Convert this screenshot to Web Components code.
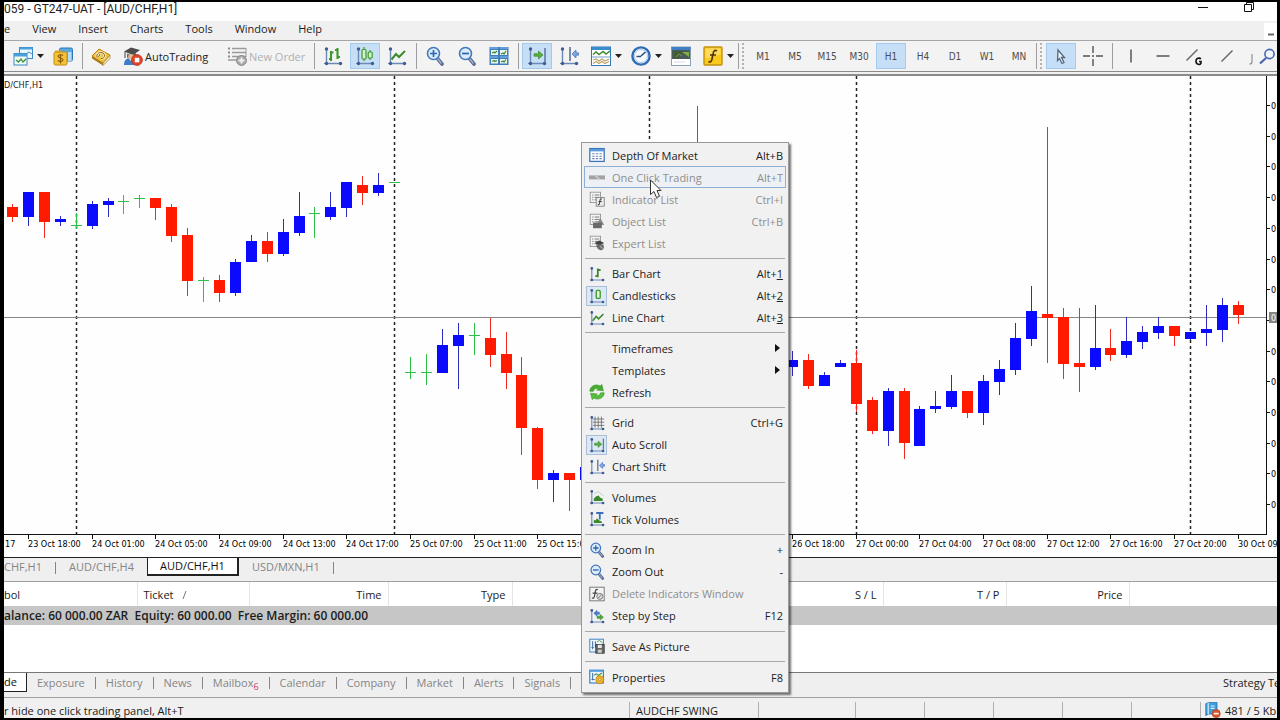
<!DOCTYPE html>
<html lang="en">
<head>
<meta charset="utf-8">
<title>GT247-UAT - [AUD/CHF,H1]</title>
<style>
  html, body { height: 100%; }
  body {
    margin: 0;
    padding: 2px 3px 2px 4px;
    box-sizing: border-box;
    background: #000;
    overflow: hidden;
    font-family: "Open Sans", "Noto Sans", sans-serif;
    font-size: 11px;
    color: #1c1c1c;
  }
</style>
</head>
<body>
<terminal-window>
  <title-bar slot="top">059 - GT247-UAT - [AUD/CHF,H1]</title-bar>
  <menu-bar slot="top" items="e,View,Insert,Charts,Tools,Window,Help"></menu-bar>
  <tool-bar slot="top">
    <tool-button icon="newChart" label="New chart" drop></tool-button>
    <tool-button icon="profiles" label="Profiles"></tool-button>
    <tool-sep></tool-sep>
    <tool-button icon="tag" label="MetaEditor"></tool-button>
    <tool-button icon="expert" style="--w: 102px" text>AutoTrading</tool-button>
    <tool-button icon="order" style="--w: 88px" text disabled>New Order</tool-button>
    <tool-sep></tool-sep>
    <tool-button icon="bars" label="Bar chart"></tool-button>
    <tool-button icon="candles" label="Candlesticks" active></tool-button>
    <tool-button icon="line" label="Line chart"></tool-button>
    <tool-sep></tool-sep>
    <tool-button icon="zoomIn" label="Zoom in"></tool-button>
    <tool-button icon="zoomOut" label="Zoom out"></tool-button>
    <tool-button icon="tile" label="Tile windows"></tool-button>
    <tool-sep></tool-sep>
    <tool-button icon="scroll" label="Auto scroll" active></tool-button>
    <tool-button icon="shift" label="Chart shift"></tool-button>
    <tool-button icon="indicators" label="Indicators" drop></tool-button>
    <tool-button icon="clock" label="Periods" drop></tool-button>
    <tool-button icon="template" label="Templates"></tool-button>
    <tool-button icon="func" label="Functions" drop></tool-button>
    <tool-sep grip></tool-sep>
    <tool-button frame>M1</tool-button>
    <tool-button frame>M5</tool-button>
    <tool-button frame>M15</tool-button>
    <tool-button frame>M30</tool-button>
    <tool-button frame active>H1</tool-button>
    <tool-button frame>H4</tool-button>
    <tool-button frame>D1</tool-button>
    <tool-button frame>W1</tool-button>
    <tool-button frame>MN</tool-button>
    <tool-sep grip></tool-sep>
    <tool-button icon="pointer" label="Cursor" active></tool-button>
    <tool-button icon="cross" label="Crosshair"></tool-button>
    <tool-sep></tool-sep>
    <tool-button icon="vline" label="Vertical line"></tool-button>
    <tool-button icon="hline" label="Horizontal line"></tool-button>
    <tool-button icon="gann" label="Gann line"></tool-button>
    <tool-button icon="trend" label="Trendline"></tool-button>
    <tool-button icon="more" label="More" style="--w: 12px"></tool-button>
    <tool-button icon="search" label="Search" style="--w: 20px"></tool-button>
  </tool-bar>
  <price-chart></price-chart>
  <chart-tabs slot="bottom" items="CHF,H1|AUD/CHF,H4|AUD/CHF,H1|USD/MXN,H1" current="2"></chart-tabs>
  <trade-table slot="bottom"></trade-table>
  <panel-tabs slot="bottom"></panel-tabs>
  <status-bar slot="bottom">
    <span>r hide one click trading panel, Alt+T</span>
    <span slot="profile">AUDCHF SWING</span>
    <span slot="traffic">481 / 5 Kb</span>
  </status-bar>
</terminal-window>

<context-menu>
  <menu-item icon="depth">Depth Of Market<span slot="key">Alt+B</span></menu-item>
  <menu-item icon="oneClick" disabled hot>One Click Trading<span slot="key">Alt+T</span></menu-item>
  <menu-item icon="indList" disabled>Indicator List<span slot="key">Ctrl+I</span></menu-item>
  <menu-item icon="objList" disabled>Object List<span slot="key">Ctrl+B</span></menu-item>
  <menu-item icon="expList" disabled>Expert List</menu-item>
  <hr>
  <menu-item icon="bar1">Bar Chart<span slot="key">Alt+<u>1</u></span></menu-item>
  <menu-item icon="candle1" checked>Candlesticks<span slot="key">Alt+<u>2</u></span></menu-item>
  <menu-item icon="line">Line Chart<span slot="key">Alt+<u>3</u></span></menu-item>
  <hr>
  <menu-item sub>Timeframes</menu-item>
  <menu-item sub>Templates</menu-item>
  <menu-item icon="refresh">Refresh</menu-item>
  <hr>
  <menu-item icon="grid">Grid<span slot="key">Ctrl+G</span></menu-item>
  <menu-item icon="scroll" checked>Auto Scroll</menu-item>
  <menu-item icon="shift">Chart Shift</menu-item>
  <hr>
  <menu-item icon="volumes">Volumes</menu-item>
  <menu-item icon="ticks">Tick Volumes</menu-item>
  <hr>
  <menu-item icon="zoomIn">Zoom In<span slot="key">+</span></menu-item>
  <menu-item icon="zoomOut">Zoom Out<span slot="key">-</span></menu-item>
  <menu-item icon="delInd" disabled>Delete Indicators Window</menu-item>
  <menu-item icon="step">Step by Step<span slot="key">F12</span></menu-item>
  <hr>
  <menu-item icon="save">Save As Picture</menu-item>
  <hr>
  <menu-item icon="props">Properties<span slot="key">F8</span></menu-item>
</context-menu>
<mouse-pointer></mouse-pointer>

<script>
'use strict';

// shared pieces of the 20x20 icons
const AXES = `<path d="M3.5 2v15.5H18" fill="none" stroke="#6d89b5" stroke-width="1.4"/>
  <path d="M1 17.500h3M3.500 16v3" stroke="#6d89b5"/>
  <circle cx="3.500" cy="3" r="1.700" fill="#3d5c92"/><circle cx="3.500" cy="17.500" r="1.700" fill="#3d5c92"/><circle cx="17.500" cy="17.500" r="1.700" fill="#3d5c92"/>`;
const LENS = `<path d="M12 12l5 6" stroke="#5c6c90" stroke-width="3.600" stroke-linecap="round"/><path d="M12 12l4.500 5.500" stroke="#a7b6d2" stroke-width="1.200"/>
  <circle cx="8.500" cy="7.500" r="6" fill="#dcecfb" stroke="#4478bd" stroke-width="1.600"/>`;
const LIST = `<rect x="1.500" y="1.500" width="13" height="13" fill="#f4f4f4" stroke="#8a8a8a"/>
  <path d="M4 5h1.500M7 5h6M4 8h1.500M7 8h6M4 11h1.500M7 11h6" stroke="#777" stroke-width="1.200"/>`;

const ICONS = {
  newChart: `<rect x="6.500" y="1.500" width="13" height="11" fill="#e8f6fd" stroke="#3a8ac8"/><path d="M6.500 2.500h13" stroke="#4aa0dc" stroke-width="2"/><path d="M8 7l3 2 5-3 3 2" fill="none" stroke="#4a90b8"/>
    <rect x="1" y="7.500" width="13" height="11.500" fill="#f2faf4" stroke="#3a8ac8"/><path d="M1 9h13" stroke="#4aa0dc" stroke-width="3"/><path d="M3 14l2.500 2 2.500-3 2 3 3-3" fill="none" stroke="#3a8f3a" stroke-width="1.300"/>`,
  profiles: `<rect x="6.500" y="2" width="13" height="13" rx="1.500" fill="#5aa8e0" stroke="#2f76b5"/><path d="M15 15v-9h3.500v9z" fill="#b7dcf5"/>
    <rect x="1" y="6" width="13" height="13" rx="1.500" fill="#f6c23a" stroke="#c08c14"/><path d="M2 5.500h6" stroke="#d9a426" stroke-width="2"/>
    <path d="M10 9.500c-1-1.200-5-1-5 .8 0 2.200 5 1.200 5 3.500 0 2-4 2-5.200.6M7.500 8v9.500" fill="none" stroke="#8a5f08" stroke-width="1.200"/>`,
  tag: `<path d="M1 10L8 3l11 6-7 8.500z" fill="#f0bf3c" stroke="#b88415"/><path d="M1 10v2.500l11 7V17z" fill="#a87c16"/><path d="M12 17l7-8v3.500l-7 7z" fill="#efe6bd" stroke="#a0822b" stroke-width=".7"/>
    <path d="M6 11c-1-3 3-6 6-4s1 6-2 5.500M9 8l-1.500 3" fill="none" stroke="#fff6c8" stroke-width="2.600"/><path d="M6 11c-1-3 3-6 6-4s1 6-2 5.500M9 8l-1.500 3" fill="none" stroke="#7a5a0a" stroke-width="1"/>`,
  expert: `<path d="M1 5.500L8 1.500l9 2.500-7 5z" fill="#4c4c4c"/><path d="M4 7.500v4c3 2 7 1 9-1v-4l-4 3z" fill="#6b6b6b"/><path d="M2 6v6" stroke="#444"/>
    <circle cx="8" cy="11" r="2.800" fill="#e8b68c"/><path d="M1 19c0-5 2.500-6.500 4.500-6.500L8 15l2.500-2.500c2.500 0 4.500 1.500 4.500 6.500z" fill="#3f7fc8"/>
    <circle cx="14" cy="14" r="5.400" fill="#e0452a" stroke="#b2301c" stroke-width=".8"/><rect x="11.800" y="11.800" width="4.500" height="4.500" fill="#fff"/>`,
  order: `<path d="M1 2.500h2M1 6.500h2M1 10.500h2" stroke="#8c8c8c" stroke-width="2"/><path d="M5 2.500h14M5 6.500h14M5 10.500h14M1 14h8" stroke="#9a9a9a" stroke-width="1.600"/><path d="M19 2v9" stroke="#9a9a9a"/>
    <circle cx="14.500" cy="14.500" r="5" fill="#a8a8a8" stroke="#8e8e8e"/><path d="M14.500 11.500v6M11.500 14.500h6" stroke="#f3f3f3" stroke-width="1.800"/>`,
  bars: AXES + `<path d="M8 5v10M6 13h2M8 6.500h2.500M14.500 2v11M12 4h2.500M14.500 11H17" stroke="#3c9a2c" stroke-width="2.100" fill="none"/>`,
  bar1: AXES + `<path d="M11 3v11M8 12.500h3M11 5h3.500" stroke="#3a8a2c" stroke-width="2.200" fill="none"/>`,
  candles: AXES + `<path d="M9 1v14M15 4v10" stroke="#3c9a2c" stroke-width="1.200"/><rect x="7" y="3.500" width="4" height="9.500" rx="1" fill="#d5f3c8" stroke="#3c9a2c" stroke-width="1.200"/><rect x="13.200" y="6" width="4" height="6" rx="1" fill="#d5f3c8" stroke="#3c9a2c" stroke-width="1.200"/>`,
  candle1: AXES + `<rect x="9" y="3" width="5" height="10" rx="1.500" fill="#e4f6dc" stroke="#3c9a2c" stroke-width="1.700"/>`,
  line: AXES + `<path d="M4.500 13.500L9 8l3 3 6-6" fill="none" stroke="#3c8a2c" stroke-width="2"/>`,
  zoomIn: LENS + `<path d="M5 7.500h7M8.500 4v7" stroke="#2f66b0" stroke-width="1.700"/>`,
  zoomOut: LENS + `<path d="M5 7.500h7" stroke="#2f66b0" stroke-width="1.700"/>`,
  tile: `<rect x=".5" y="1" width="19" height="18" fill="#3f7fc0"/><path d="M2 4h7v5H2zM11 4h7v5h-7zM2 13h7v4.500H2zM11 13h7v4.500h-7z" fill="#eef8ee"/><path d="M1 2h8M11 2h8M1 11h8M11 11h8" stroke="#86c3ee"/>
    <path d="M3 7l2-1 1 1 2-2M12 8l2-1 1 1 2-3M3 15.500l2-1 1 1 2-1M12 16l2-1 1 1 2-2.500" fill="none" stroke="#3a8a3a" stroke-width="1.200"/>`,
  scroll: AXES + `<path d="M18 2v14" stroke="#5f7aa6" stroke-width="1.600"/><path d="M7 7.800h4.500V5l4.500 4-4.500 4v-2.800H7z" fill="#58b040" stroke="#3a8a2a" stroke-width=".7"/>`,
  shift: AXES + `<path d="M11 1v14" stroke="#5c6f90" stroke-width="1.600"/><path d="M19.500 6.800H17V4l-4 4 4 4V9.200h2.500z" fill="#7fa6e6" stroke="#3f6cb8" stroke-width=".7"/>`,
  indicators: `<rect x=".5" y="1" width="19" height="18.500" fill="#fff" stroke="#2f77b8"/><path d="M1 2.500h18.500" stroke="#3a8ccc" stroke-width="3"/><path d="M1 11h18.500" stroke="#6f9fc8"/>
    <path d="M2 8.500l3-2.500 3 2.500 4-3 3 2.500 4-3" fill="none" stroke="#3a8a2a" stroke-width="1.500"/><path d="M2 14l3-1 3 2 3-2 3 2 4-2M2 17.500l3-2 3 2 3-2 3 2 4-2" fill="none" stroke="#bfa36a" stroke-width="1.300"/>`,
  clock: `<circle cx="10" cy="10" r="8.600" fill="#f6fbff" stroke="#2f6cb3" stroke-width="2.400"/><circle cx="10" cy="10" r="6.500" fill="none" stroke="#a9c8e8"/><path d="M10 10l4.500-4M10 10.500H5.500" stroke="#33506f" stroke-width="1.600"/>`,
  template: `<rect x=".5" y="1" width="19" height="18.500" fill="#fff" stroke="#8aa0b8"/><rect x=".5" y="1" width="19" height="3" fill="#3f7fc8"/><rect x="1" y="4" width="18" height="9" fill="#4a5a58"/><path d="M3 5h9l-5 7H3z" fill="#3f5f38"/><path d="M11 6h7v5z" fill="#7fae42"/><path d="M5 11l3-3 3 2" stroke="#8a8f3a" fill="none"/><path d="M3 16h11" stroke="#d4dae2"/>`,
  func: `<rect x="1" y="1" width="18" height="18" rx="1" fill="#fbc91e" stroke="#c2920c" stroke-width="1.400"/><path d="M2.500 2.500h15v6l-15 4z" fill="#ffe27a" opacity=".7"/><path d="M14 5c-2.500-1.500-3.500 0-4 3l-1 5c-.5 3-2 3.500-3.500 2.500M7 9h6" fill="none" stroke="#4a3604" stroke-width="1.600"/>`,
  pointer: `<path d="M7 4l6.500 7.500H10.500l2.500 5-2 1-2.500-5L6.500 14.500z" fill="#eaf2fa" stroke="#54677c" stroke-width="1.300"/>`,
  cross: `<path d="M10 0v7M10 13v7M0 10h7M13 10h7M9 10h2" stroke="#555" stroke-width="1.400"/>`,
  vline: `<path d="M10 3.500v13" stroke="#606060" stroke-width="1.600"/>`,
  hline: `<path d="M3.500 10h13" stroke="#606060" stroke-width="1.600"/>`,
  gann: `<path d="M1.500 14.500l11-11" stroke="#666" stroke-width="1.500"/><path d="M15.800 13.200c-1-1.700-4.800-1.400-4.800 2.100s4 4 5 1.800v-1.600h-2" fill="none" stroke="#111" stroke-width="1.600"/>`,
  trend: `<path d="M4.500 15.500l11-11" stroke="#666" stroke-width="1.500"/>`,
  more: `<path d="M12 8v8c0 2-1 2-2.500 2" fill="none" stroke="#888" stroke-width="1.100"/>`,
  search: `<path d="M8 12l-6 5.500" stroke="#4766b4" stroke-width="2.200"/><circle cx="11.500" cy="8" r="4.600" fill="#f1f4fb" stroke="#4766b4" stroke-width="1.600"/>`,
  depth: `<rect x="1" y="2" width="18" height="16" fill="#fff" stroke="#3f74b5" stroke-width="1.600"/><path d="M1 4h18" stroke="#5b9ae0" stroke-width="3"/><path d="M4 8.500h12M4 11.500h12M4 14.500h12" stroke="#6b87b0" stroke-width="1.400" stroke-dasharray="3 1.500"/>`,
  oneClick: `<rect x="0" y="8" width="20" height="5" fill="#a2a2a2"/><path d="M8 8l5 5" stroke="#ccc" stroke-width="2"/>`,
  indList: LIST + `<rect x="9" y="8" width="10" height="11" fill="#eee" stroke="#777"/><path d="M16 10c-3-1-2 3-3 6-.5 1.500-1.500 1-2 1M12 13h4" fill="none" stroke="#444" stroke-width="1.300"/>`,
  objList: LIST + `<path d="M14 6l5 9h-9z" fill="#8a8a8a"/><rect x="5" y="12" width="11" height="7" fill="#6a6a6a"/>`,
  expList: LIST + `<path d="M7 10l6-3 6 3-6 3z" fill="#444"/><path d="M9 12c0 3 2 7 6 7s4-4 3-7z" fill="#6c6c6c"/><path d="M14 14l3 3" stroke="#ddd"/>`,
  refresh: `<path d="M1 9C1 3 8-1 14 2.500L16 .5l2 8-8.500-1 2.500-2C9 4.500 6 6 5.500 9z" fill="#46ad30" stroke="#2f8a1e" stroke-width=".7"/><path d="M19 11c0 6-7 10-13 6.500L4 19.500l-2-8 8.500 1-2.500 2c3 1 6-.5 6.500-3.500z" fill="#56be3c" stroke="#2f8a1e" stroke-width=".7"/>`,
  grid: AXES + `<path d="M7.500 2v14M11.500 2v14M15.500 2v14M5 5h14M5 9h14M5 13h14" stroke="#6f6f6f" stroke-width="1.100"/>`,
  volumes: AXES + `<path d="M6 15v-3l3-3 3-1 2 3 3 1v3z" fill="#3a8a2c"/><path d="M7 6l4-3 4 3 3 3" fill="none" stroke="#b3c6b3"/>`,
  ticks: AXES + `<path d="M6 15v-4l2 1 2-3 3 3 3 1v2z" fill="#3a8a2c"/><path d="M9 2.500h9M13.500 2.500v8" stroke="#3a6fb8" stroke-width="2.200"/>`,
  delInd: `<rect x="1" y="1.500" width="18" height="17" fill="#f4f4f4" stroke="#777" stroke-width="1.200"/><path d="M11 4.500c-3-1-3 2-3.500 5l-1 4c-.5 2-1.500 2-3 1.500M4.500 9h6" fill="none" stroke="#444" stroke-width="1.500"/><circle cx="13.500" cy="13" r="3.800" fill="#ddd" stroke="#666"/><path d="M11.500 15l4-4" stroke="#666"/>`,
  step: AXES + `<path d="M6 6.500L10 3v2.200h3v2.600h-3V10z" fill="#4a7fc8" stroke="#3565aa" stroke-width=".7"/><path d="M18 11.500L14 8v2.200h-4v2.600h4V15z" fill="#4aa838" stroke="#358a28" stroke-width=".7"/>`,
  save: `<rect x="1" y="1.500" width="17" height="16" fill="#eef6fd" stroke="#3d80c0" stroke-width="1.200"/><path d="M4.500 4v10M3 12h3M8 4v8" stroke="#4a74a8" stroke-width="1.300"/><rect x="8.500" y="8" width="10.500" height="11" fill="#666" stroke="#333"/><rect x="11" y="8.500" width="5" height="4" fill="#e4e4e4"/><rect x="11" y="14.500" width="5" height="4" fill="#ccc"/><path d="M10 5l3-2 4 3" stroke="#3a8a2a" fill="none"/>`,
  props: `<rect x="1" y="1.500" width="17" height="16" fill="#eef6fd" stroke="#2f7cc4" stroke-width="1.400"/><path d="M1 2.500h17" stroke="#4a9ae0" stroke-width="2"/><path d="M4.500 5v9M3 13h4" stroke="#4a74a8" stroke-width="1.300"/><path d="M6 8l3-2 3 2 4-3" fill="none" stroke="#3a8a2a" stroke-width="1.300"/><circle cx="13.500" cy="13.500" r="5" fill="#f2b82a" stroke="#b9831a"/><circle cx="13.500" cy="13.500" r="1.600" fill="#fff0c0" stroke="#b9831a"/>`,
  book: `<path d="M1 2l4-1.500h10V15H4l-3 2z" fill="#3f9ede" stroke="#1f6fae"/><path d="M4 1v14" stroke="#d9effc" stroke-width="1.500"/><path d="M7 5h5M7 8h5" stroke="#d9effc" stroke-width="1.500"/><circle cx="14" cy="14.500" r="5" fill="#e0572f" stroke="#b23e1b"/><path d="M11 14.500h6" stroke="#fff" stroke-width="2"/>`
};

const icon = (name, size) =>
  `<svg width="${size}" height="${size}" viewBox="0 0 20 20" aria-hidden="true">${ICONS[name] || ''}</svg>`;

class Base extends HTMLElement {
  connectedCallback() {
    const template = document.createElement('template');
    template.innerHTML = this.render();
    this.attachShadow({ mode: 'open' }).appendChild(template.content.cloneNode(true));
  }
}

customElements.define('terminal-window', class extends Base {
  render() {
    return `
    <style>
      :host { display: flex; flex-direction: column; height: 100%; background: #fefefe; overflow: hidden; }
      main { flex: 1; min-height: 0; display: flex; }
    </style>
    <slot name="top"></slot>
    <main><slot></slot></main>
    <slot name="bottom"></slot>`;
  }
});

customElements.define('title-bar', class extends Base {
  render() {
    return `
    <style>
      :host { display: flex; align-items: flex-start; justify-content: space-between; height: 19px; font-family: Roboto, "Open Sans", sans-serif; font-size: 12px; line-height: 15px; color: #222; white-space: pre; }
      nav { display: flex; gap: 34px; padding-right: 22px; }
      button { border: 0; padding: 0; background: none; width: 12px; height: 12px; display: block; }
      svg { display: block; }
    </style>
    <slot></slot>
    <nav>
      <button aria-label="Minimize"><svg width="12" height="12"><path d="M1 5.500h10" stroke="#111"/></svg></button>
      <button aria-label="Restore"><svg width="12" height="12"><path d="M1.500 2.500h7v7h-7zM3.500 2.500v-2h7v7h-2" fill="none" stroke="#111"/></svg></button>
    </nav>`;
  }
});

customElements.define('menu-bar', class extends Base {
  render() {
    const items = this.getAttribute('items').split(',');
    return `
    <style>
      :host { display: flex; height: 19px; background: #f0f0f0; align-items: flex-start; }
      button { border: 0; background: none; font: inherit; color: inherit; padding: 0 11px; line-height: 16px; }
      button:first-of-type { padding-left: 0; }
      span { margin-left: auto; align-self: stretch; background: #fff; width: 13px; margin-top: 2px; display: flex; align-items: center; justify-content: center; }
    </style>
    ${items.map((t) => `<button>${t}</button>`).join('')}
    <span><svg width="7" height="10"><path d="M1 7.500h6" stroke="#666" stroke-width="2"/></svg></span>`;
  }
});

customElements.define('tool-bar', class extends Base {
  render() {
    return `
    <style>
      :host { display: block; border-bottom: 2px solid #8b8b8b; background: #f0f0f0; padding-bottom: 2px; }
      div { display: flex; align-items: center; gap: 2px; height: 30px; padding-left: 4px; border-top: 1px solid #a6a6a6; border-bottom: 1px solid #8b8b8b; background: #f3f3f3; overflow: hidden; }
    </style>
    <div><slot></slot></div>`;
  }
});

customElements.define('tool-sep', class extends Base {
  render() {
    return `
    <style>
      :host { display: flex; flex: none; width: 2px; padding-left: 2px; height: 26px; }
      i { width: 1px; background: #9d9d9d; }
      :host([grip]) { width: 8px; padding-left: 0; gap: 3px; }
      b { display: none; border-left: 2px dotted #b2b2b2; }
      :host([grip]) b { display: block; }
    </style><i></i><b></b>`;
  }
});

customElements.define('tool-button', class extends Base {
  render() {
    const name = this.getAttribute('icon');
    const label = this.getAttribute('label');
    return `
    <style>
      :host { display: block; flex: none; width: var(--w, 30px); }
      :host([drop]) { width: 38px; }
      button { display: flex; align-items: center; justify-content: center; width: 100%; height: 26px; padding: 0; border: 1px solid transparent; background: none; font: inherit; color: #222; white-space: nowrap; overflow: hidden; }
      :host([drop]) button { justify-content: flex-start; padding-left: 4px; gap: 4px; }
      :host([text]) button { justify-content: flex-start; padding-left: 4px; gap: 2px; }
      :host([disabled]) button { color: #b0b0b0; }
      :host([frame]) button { font: 10px "DejaVu Sans Condensed", "DejaVu Sans", sans-serif; color: #4c4c4c; }
      :host([active]) button { background: #c6dff6; border-color: #a3c9ec; }
      svg { flex: none; }
    </style>
    <button ${label ? `aria-label="${label}"` : ''} ${this.hasAttribute('disabled') ? 'disabled' : ''}>
      ${name ? icon(name, 20) : ''}<slot></slot>
      ${this.hasAttribute('drop') ? '<svg width="7" height="4"><path d="M0 0h7L3.500 4z" fill="#222"/></svg>' : ''}
    </button>`;
  }
});

// index, high, low, body top, body bottom, kind (u = up, d = down, f = flat)
const CANDLES = [
  [0, 204, 222, 207, 217, 'd'], [1, 192, 226, 192, 217, 'u'], [2, 192, 238, 192, 222, 'd'],
  [3, 216, 226, 219, 222, 'u'], [4, 213, 229, 225, 226, 'f'], [5, 201, 229, 204, 226, 'u'],
  [6, 198, 217, 201, 205, 'u'], [7, 195, 214, 201, 202, 'f'], [8, 195, 208, 198, 199, 'f'],
  [9, 198, 220, 198, 208, 'd'], [10, 204, 242, 207, 236, 'd'], [11, 228, 296, 235, 281, 'd'],
  [12, 277, 302, 280, 281, 'f'], [13, 275, 302, 280, 293, 'd'], [14, 259, 296, 262, 293, 'u'],
  [15, 235, 262, 241, 262, 'u'], [16, 232, 262, 241, 254, 'd'], [17, 219, 256, 232, 254, 'u'],
  [18, 192, 236, 216, 233, 'u'], [19, 207, 238, 213, 214, 'f'], [20, 192, 220, 207, 217, 'u'],
  [21, 182, 217, 182, 208, 'u'], [22, 176, 205, 185, 193, 'd'], [23, 173, 196, 185, 193, 'u'],
  [24, 182, 183, 182, 183, 'f'], [25, 357, 379, 372, 373, 'f'], [26, 354, 385, 372, 373, 'f'],
  [27, 329, 373, 345, 373, 'u'], [28, 323, 389, 335, 346, 'u'], [29, 323, 355, 335, 336, 'f'],
  [30, 318, 367, 338, 355, 'd'], [31, 332, 389, 354, 373, 'd'], [32, 357, 455, 375, 428, 'd'],
  [33, 427, 489, 428, 480, 'd'], [34, 470, 502, 473, 480, 'u'], [35, 473, 511, 473, 480, 'd'],
  [36, 467, 480, 467, 480, 'u'], [43, 106, 220, 160, 220, 'd'], [49, 351, 376, 360, 367, 'u'],
  [50, 354, 389, 360, 386, 'd'], [51, 372, 386, 375, 386, 'u'], [52, 360, 367, 363, 367, 'u'],
  [53, 350, 412, 363, 404, 'd'], [54, 397, 434, 400, 431, 'd'], [55, 388, 446, 391, 431, 'u'],
  [56, 388, 459, 391, 443, 'd'], [57, 406, 446, 409, 446, 'u'], [58, 391, 413, 406, 409, 'u'],
  [59, 375, 409, 391, 407, 'u'], [60, 391, 418, 391, 413, 'd'], [61, 375, 425, 381, 413, 'u'],
  [62, 360, 395, 369, 382, 'u'], [63, 323, 375, 338, 370, 'u'], [64, 286, 346, 311, 339, 'u'],
  [65, 127, 363, 314, 318, 'd'], [66, 308, 379, 317, 364, 'd'], [67, 308, 392, 363, 367, 'd'],
  [68, 305, 370, 348, 367, 'u'], [69, 329, 361, 348, 355, 'd'], [70, 317, 358, 341, 355, 'u'],
  [71, 326, 349, 332, 342, 'u'], [72, 317, 339, 326, 333, 'u'], [73, 326, 346, 326, 336, 'd'],
  [74, 332, 340, 332, 339, 'u'], [75, 305, 346, 329, 333, 'u'], [76, 298, 342, 305, 330, 'u'],
  [77, 301, 324, 305, 315, 'd']
];
const STEP = 15.92;
const FIRST = 8;
const TOP = 76;
const COLORS = { u: ['#0a0aff', '#2c2cc0'], d: ['#ff1a00', '#f02a1c'], f: ['#2fc04a', '#2fc04a'] };
const TIMES = [
  [1, '23 Oct 18:00'], [5, '24 Oct 01:00'], [9, '24 Oct 05:00'], [13, '24 Oct 09:00'], [17, '24 Oct 13:00'],
  [21, '24 Oct 17:00'], [25, '25 Oct 07:00'], [29, '25 Oct 11:00'], [33, '25 Oct 15:00'], [49, '26 Oct 18:00'],
  [53, '27 Oct 00:00'], [57, '27 Oct 04:00'], [61, '27 Oct 08:00'], [65, '27 Oct 12:00'], [69, '27 Oct 16:00'],
  [73, '27 Oct 20:00'], [77, '30 Oct 09']
];
const LAST_PRICE = 241;
const at = (i) => Math.round(FIRST + i * STEP);

customElements.define('price-chart', class extends Base {
  render() {
    const candles = CANDLES.map(([i, high, low, top, bottom, kind]) => {
      const [fill, wick] = COLORS[kind];
      const x = at(i);
      return `<path d="M${x + 0.5} ${high - TOP}V${low - TOP}" stroke="${wick}"/>
        <rect x="${x - 5}" y="${top - TOP}" width="11" height="${bottom - top}" fill="${fill}"/>`;
    }).join('');
    const days = [4, 24, 40, 53, 74].map((i) =>
      `<path d="M${at(i) + 0.5} 0V458" stroke="#222" stroke-width="1.500" stroke-dasharray="3 3"/>`).join('');
    const prices = Array.from({ length: 14 }, (_, n) => Math.round(29 + n * 30.7));
    return `
    <style>
      :host { flex: 1; min-width: 0; display: grid; grid-template: 1fr 22px / 1fr 10px; border-bottom: 1px solid #222; background: #fefefe; font: 9px "DejaVu Sans Condensed", "DejaVu Sans", sans-serif; overflow: hidden; }
      svg { display: block; width: 100%; height: 100%; overflow: hidden; }
      .plot { border-right: 1px solid #111; border-bottom: 1px solid #111; min-width: 0; min-height: 0; overflow: hidden; }
      .times { grid-column: 1 / 3; min-width: 0; }
      .scale { min-height: 0; overflow: hidden; }
    </style>
    <div class="plot"><svg role="img" aria-label="AUD/CHF hourly candles">
      ${days}
      <path d="M0 ${LAST_PRICE + 0.5}h3000" stroke="#868686"/>
      ${candles}
      <text x="0" y="12" fill="#222">D/CHF,H1</text>
    </svg></div>
    <div class="scale"><svg>
      ${prices.map((y) => `<path d="M0 ${y + 0.5}h3" stroke="#111"/>${Math.abs(y - LAST_PRICE) < 8 ? '' : `<text x="4" y="${y + 4}">0</text>`}`).join('')}
      <rect x="2" y="236" width="10" height="11" fill="#868686"/><text x="4" y="245" fill="#fff">0</text>
    </svg></div>
    <div class="times"><svg>
      <text x="1" y="12">17</text>
      ${TIMES.map(([i, t]) => `<path d="M${at(i) + 0.5} 0v4" stroke="#111"/><text x="${at(i)}" y="12">${t}</text>`).join('')}
    </svg></div>`;
  }
});

customElements.define('chart-tabs', class extends Base {
  render() {
    const current = +this.getAttribute('current');
    return `
    <style>
      :host { display: flex; height: 24px; box-sizing: border-box; background: #efefef; border-bottom: 1px solid #a0a0a0; align-items: flex-start; }
      button { font: inherit; color: #858585; background: none; border: 0; padding: 0 13px; height: 18px; line-height: 18px; display: flex; align-items: center; }
      button:first-of-type { padding-left: 0; }
      i { width: 1px; height: 12px; background: #858585; margin-top: 4px; }
      .on { background: #fff; color: #111; border: solid #222; border-width: 0 2px 2px 1px; padding: 0 12px; }
    </style>
    ${this.getAttribute('items').split('|').map((t, n) =>
      `<button class="${n === current ? 'on' : ''}">${t}</button>${n === current || n === current - 1 ? '' : '<i></i>'}`).join('')}`;
  }
});

customElements.define('trade-table', class extends Base {
  render() {
    return `
    <style>
      :host { display: block; height: 91px; box-sizing: border-box; background: #fff; border-bottom: 1px solid #777; }
      table { width: 100%; border-collapse: collapse; table-layout: fixed; }
      th { height: 24px; padding: 0 6px; box-sizing: border-box; font-weight: 400; text-align: right; border-right: 1px solid #e4e4e4; }
      th:nth-child(-n+2) { text-align: left; }
      th:first-child { padding-left: 0; }
      th:last-child { border: 0; }
      th svg { margin-left: 9px; }
      td { height: 19px; line-height: 19px; padding: 0; background: #c6c6c6; font-size: 12px; font-weight: 600; white-space: pre; }
    </style>
    <table>
      <colgroup><col width="133"><col width="112"><col width="139"><col width="124"><col width="248"><col width="123"><col width="123"><col width="123"><col></colgroup>
      <tr><th>bol</th><th>Ticket<svg width="5" height="8"><path d="M1 8l3-8" stroke="#777"/></svg></th><th>Time</th><th>Type</th><th></th><th>S / L</th><th>T / P</th><th>Price</th><th></th></tr>
      <tr><td colspan="9">alance: 60 000.00 ZAR  Equity: 60 000.00  Free Margin: 60 000.00</td></tr>
    </table>`;
  }
});

customElements.define('panel-tabs', class extends Base {
  render() {
    const tabs = ['Exposure', 'History', 'News', 'Mailbox<sub>6</sub>', 'Calendar', 'Company', 'Market', 'Alerts', 'Signals'];
    return `
    <style>
      :host { display: flex; height: 25px; box-sizing: border-box; background: #efefef; border-bottom: 1px solid #a0a0a0; align-items: flex-start; overflow: hidden; }
      button { font: inherit; color: #858585; background: none; border: 0; border-right: 1px solid #858585; padding: 0 10px; height: 12px; line-height: 12px; margin-top: 4px; white-space: nowrap; }
      .on { color: #111; background: #fff; height: 19px; margin: 0; line-height: 18px; border: solid #222; border-width: 0 1px 1px 0; padding: 0 9px 0 0; }
      sub { font-size: 9px; line-height: 1px; color: #d8365a; }
      .tester { margin: 0 0 0 auto; width: 54px; flex: none; border: 0; color: #222; padding: 0; text-align: left; line-height: 20px; height: 20px; overflow: hidden; }
    </style>
    <button class="on">de</button>
    ${tabs.map((t) => `<button>${t}</button>`).join('')}
    <button class="tester">Strategy Te</button>`;
  }
});

customElements.define('status-bar', class extends Base {
  render() {
    return `
    <style>
      :host { display: flex; height: 20px; background: #f0f0f0; overflow: hidden; white-space: nowrap; }
      div { flex: none; box-sizing: border-box; width: 69px; padding-left: 4px; border-left: 1px solid #b0b0b0; margin-top: 4px; line-height: 18px; }
      .text { flex: 1; border: 0; padding: 0; }
      .profile { width: 129px; padding-left: 6px; }
      .long { width: 97px; }
      .traffic { width: 77px; display: flex; gap: 4px; }
    </style>
    <div class="text"><slot></slot></div>
    <div class="profile"><slot name="profile"></slot></div>
    <div class="long"></div><div></div><div></div><div></div><div></div><div></div>
    <div class="traffic">${icon('book', 16)}<slot name="traffic"></slot></div>`;
  }
});

customElements.define('context-menu', class extends Base {
  render() {
    return `
    <style>
      :host { position: absolute; left: 581px; top: 142px; bottom: 27px; width: 208px; box-sizing: border-box; display: flex; flex-direction: column; padding: 1px 2px 4px; border: 1px solid #9a9a9a; background: #f1f1f1; box-shadow: 2px 2px 2px rgba(0, 0, 0, .55); }
      ::slotted(hr) { flex: 1; margin: 0 1px; border: 0; background: linear-gradient(#a8a8a8, #a8a8a8) center / 100% 1px no-repeat; }
    </style>
    <slot></slot>`;
  }
});

customElements.define('menu-item', class extends Base {
  render() {
    return `
    <style>
      :host { display: block; flex: none; }
      button { display: flex; align-items: center; width: 100%; height: 22px; padding: 0 2px 0 1px; border: 1px solid transparent; background: none; font: inherit; color: #222; text-align: left; box-sizing: border-box; }
      i { width: 21px; height: 20px; box-sizing: border-box; border: 1px solid transparent; margin-right: 5px; display: flex; align-items: center; justify-content: center; }
      span { flex: 1; white-space: nowrap; }
      :host([disabled]) button { color: #8e8e8e; }
      :host([hot]) button { border-color: #8fb0d6; background: #edf1f5; }
      :host([checked]) i { background: #dce8f4; border-color: #a9bfd6; }
    </style>
    <button role="menuitem" ${this.hasAttribute('disabled') ? 'disabled' : ''}>
      <i>${icon(this.getAttribute('icon'), 16)}</i><span><slot></slot></span><slot name="key"></slot>
      ${this.hasAttribute('sub') ? '<svg width="8" height="8"><path d="M0 0l5 4-5 4z" fill="#111"/></svg>' : ''}
    </button>`;
  }
});

customElements.define('mouse-pointer', class extends Base {
  render() {
    return `
    <style>:host { position: absolute; left: 649px; top: 179px; pointer-events: none; }</style>
    <svg width="14" height="20"><path d="M1.500 1v14.500l3.500-3 2.500 6 3-1.200L8 11.500h4z" fill="#fff" stroke="#333"/></svg>`;
  }
});
</script>
</body>
</html>
